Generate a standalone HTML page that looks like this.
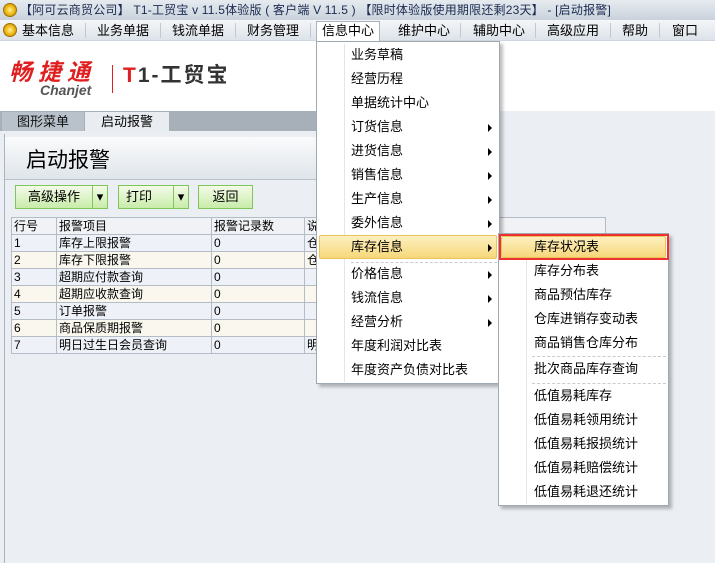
<!DOCTYPE html>
<html><head><meta charset="utf-8"><style>
*{margin:0;padding:0;box-sizing:border-box}
body{width:715px;height:563px;overflow:hidden;background:#ebeff3;font-family:"Liberation Sans","Noto Sans CJK SC",sans-serif;font-size:12px;color:#000;position:relative}
.abs{position:absolute}
#title{left:0;top:0;width:715px;height:20px;background:linear-gradient(#e6ebf0,#c9d2db);font-size:12px;line-height:20px;padding-left:20px;color:#1a2a50;white-space:nowrap;letter-spacing:0.2px}
.coin{width:14px;height:14px;border-radius:50%;background:radial-gradient(circle,#fff2a0 0,#f0c020 45%,#c08000 100%);border:1px solid #a07000}
#menu{left:0;top:20px;width:715px;height:21px;background:linear-gradient(#f4f6f8,#dde3ea);border-bottom:1px solid #cfd6de}
.mi{position:absolute;top:2px;height:18px;line-height:18px;font-size:13px;white-space:nowrap}
.sep{position:absolute;top:3px;width:1px;height:15px;background:#c0c8d0}
#logo{left:0;top:41px;width:715px;height:70px;background:#fff}
#tabs{left:0;top:111px;width:316px;height:20px;background:#a7b0b8}
.tab{position:absolute;top:1px;height:19px;line-height:19px;font-size:13px;text-align:center}
#panel{left:4px;top:134px;width:312px;height:429px;background:#ebeff3;border-left:1px solid #a9b4bf}
#head{left:5px;top:137px;width:311px;height:43px;background:linear-gradient(#fafbfc,#dfe5ea);border-bottom:1px solid #b8c2cb}
.btn{position:absolute;top:185px;height:24px;border:1px solid #7ec55a;background:linear-gradient(#f4fbe8,#c8ecaa);font-size:13px;line-height:22px;text-align:center}
table{position:absolute;left:11px;top:217px;border-collapse:collapse;font-size:12px}
td{border:1px solid #b4bcc6;height:17px;line-height:16px;padding-left:2px;white-space:nowrap;overflow:hidden}
tr.h td{background:#f0f2f5}
tr.o td{background:#eef2f8}
tr.e td{background:#faf8ee}
.dd{position:absolute;background:#fff;border:1px solid #a0a8b0;box-shadow:3px 3px 3px rgba(0,0,0,.25)}
.dd .it{position:absolute;left:0;height:24px;line-height:24px;font-size:13px;white-space:nowrap}
.arr{position:absolute;width:0;height:0;border-top:4px solid transparent;border-bottom:4px solid transparent;border-left:4px solid #000}
.hl{background:linear-gradient(#fdf0c0,#f6d77a);border:1px solid #e8c45a;border-radius:2px}
</style></head><body>
<div id="title" class="abs">【阿可云商贸公司】 T1-工贸宝 v 11.5体验版 ( 客户端 V 11.5 ) 【限时体验版使用期限还剩23天】 - [启动报警]</div>
<div class="abs coin" style="left:3px;top:3px"></div>
<div id="menu" class="abs">
<div class="abs coin" style="left:3px;top:3px"></div>
<div class="mi" style="left:22px">基本信息</div><div class="sep" style="left:85px"></div>
<div class="mi" style="left:97px">业务单据</div><div class="sep" style="left:160px"></div>
<div class="mi" style="left:172px">钱流单据</div><div class="sep" style="left:235px"></div>
<div class="mi" style="left:247px">财务管理</div><div class="sep" style="left:310px"></div>
<div class="mi" style="left:316px;top:1px;width:64px;height:20px;border:1px solid #aab4be;border-bottom:none;background:#fff;padding-left:5px">信息中心</div>
<div class="mi" style="left:398px">维护中心</div><div class="sep" style="left:460px"></div>
<div class="mi" style="left:473px">辅助中心</div><div class="sep" style="left:535px"></div>
<div class="mi" style="left:547px">高级应用</div><div class="sep" style="left:610px"></div>
<div class="mi" style="left:622px">帮助</div><div class="sep" style="left:659px"></div>
<div class="mi" style="left:672px">窗口</div>
</div>
<div id="logo" class="abs">
<div class="abs" style="left:9px;top:18px;color:#e02020;font-size:23px;line-height:26px;font-weight:bold;font-style:italic;letter-spacing:6px;white-space:nowrap">畅捷通</div>
<div class="abs" style="left:40px;top:41px;color:#555;font-size:14px;font-style:italic;font-weight:bold">Chanjet</div>
<div class="abs" style="left:112px;top:24px;width:1px;height:28px;background:#e02020"></div>
<div class="abs" style="left:123px;top:22px;font-size:21px;line-height:26px;font-weight:bold;color:#333;letter-spacing:2px;white-space:nowrap"><span style="color:#e02020">T</span>1-工贸宝</div>
</div>
<div id="tabs" class="abs">
<div class="tab" style="left:2px;width:82px;background:#b9c2ca;color:#111">图形菜单</div>
<div class="tab" style="left:85px;width:84px;background:#e9edf1">启动报警</div>
</div>
<div id="panel" class="abs"></div>
<div id="head" class="abs"><div class="abs" style="left:21px;top:7px;font-size:21px">启动报警</div></div>
<div class="btn" style="left:15px;width:92px;padding-right:14px">高级操作</div>
<div class="btn" style="left:92px;width:16px;padding:0">&#9662;</div>
<div class="btn" style="left:118px;width:56px;padding-right:14px">打印</div>
<div class="btn" style="left:173px;width:16px;padding:0">&#9662;</div>
<div class="btn" style="left:198px;width:55px">返回</div>
<table>
<tr class="h"><td style="width:45px">行号</td><td style="width:155px">报警项目</td><td style="width:93px">报警记录数</td><td style="width:301px">说</td></tr>
<tr class="o"><td>1</td><td>库存上限报警</td><td>0</td><td>仓</td></tr>
<tr class="e"><td>2</td><td>库存下限报警</td><td>0</td><td>仓</td></tr>
<tr class="o"><td>3</td><td>超期应付款查询</td><td>0</td><td></td></tr>
<tr class="e"><td>4</td><td>超期应收款查询</td><td>0</td><td></td></tr>
<tr class="o"><td>5</td><td>订单报警</td><td>0</td><td></td></tr>
<tr class="e"><td>6</td><td>商品保质期报警</td><td>0</td><td></td></tr>
<tr class="o"><td>7</td><td>明日过生日会员查询</td><td>0</td><td>明</td></tr>
</table>

<div class="dd" style="left:316px;top:41px;width:184px;height:343px">
<div class="abs" style="left:27px;top:2px;width:1px;height:338px;background:#e2e6ea"></div>
<div class="it" style="top:1px;left:34px">业务草稿</div>
<div class="it" style="top:25px;left:34px">经营历程</div>
<div class="it" style="top:49px;left:34px">单据统计中心</div>
<div class="it" style="top:73px;left:34px">订货信息</div><div class="arr" style="left:171px;top:82px"></div>
<div class="it" style="top:97px;left:34px">进货信息</div><div class="arr" style="left:171px;top:106px"></div>
<div class="it" style="top:121px;left:34px">销售信息</div><div class="arr" style="left:171px;top:130px"></div>
<div class="it" style="top:145px;left:34px">生产信息</div><div class="arr" style="left:171px;top:154px"></div>
<div class="it" style="top:169px;left:34px">委外信息</div><div class="arr" style="left:171px;top:178px"></div>
<div class="abs hl" style="left:2px;top:193px;width:178px;height:24px"></div>
<div class="it" style="top:193px;left:34px">库存信息</div><div class="arr" style="left:171px;top:202px"></div>
<div class="abs" style="left:34px;top:220px;width:146px;border-top:1px dashed #c8ccd0"></div>
<div class="it" style="top:220px;left:34px">价格信息</div><div class="arr" style="left:171px;top:229px"></div>
<div class="it" style="top:244px;left:34px">钱流信息</div><div class="arr" style="left:171px;top:253px"></div>
<div class="it" style="top:268px;left:34px">经营分析</div><div class="arr" style="left:171px;top:277px"></div>
<div class="it" style="top:292px;left:34px">年度利润对比表</div>
<div class="it" style="top:316px;left:34px">年度资产负债对比表</div>
</div>

<div class="dd" style="left:498px;top:233px;width:171px;height:273px">
<div class="abs" style="left:27px;top:2px;width:1px;height:268px;background:#e2e6ea"></div>
<div class="abs hl" style="left:2px;top:2px;width:165px;height:22px"></div>
<div class="abs" style="left:0;top:0;width:170px;height:26px;border:2px solid #f03030"></div>
<div class="it" style="top:1px;left:35px">库存状况表</div>
<div class="it" style="top:25px;left:35px">库存分布表</div>
<div class="it" style="top:49px;left:35px">商品预估库存</div>
<div class="it" style="top:73px;left:35px">仓库进销存变动表</div>
<div class="it" style="top:97px;left:35px">商品销售仓库分布</div>
<div class="abs" style="left:33px;top:122px;width:134px;border-top:1px dashed #c8ccd0"></div>
<div class="it" style="top:123px;left:35px">批次商品库存查询</div>
<div class="abs" style="left:33px;top:149px;width:134px;border-top:1px dashed #c8ccd0"></div>
<div class="it" style="top:150px;left:35px">低值易耗库存</div>
<div class="it" style="top:174px;left:35px">低值易耗领用统计</div>
<div class="it" style="top:198px;left:35px">低值易耗报损统计</div>
<div class="it" style="top:222px;left:35px">低值易耗赔偿统计</div>
<div class="it" style="top:246px;left:35px">低值易耗退还统计</div>
</div>
</body></html>
